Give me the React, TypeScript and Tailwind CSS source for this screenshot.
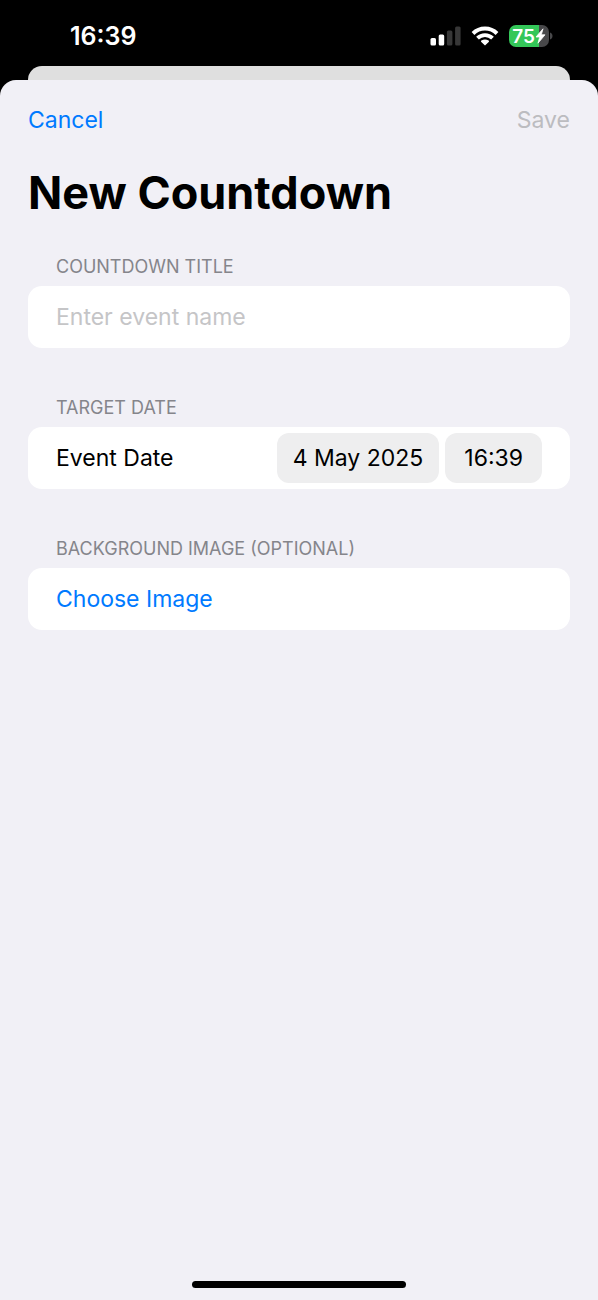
import clsx from "clsx";
import React, { ReactNode, useState } from "react";

interface ISectionProps {
  title: ReactNode;
  children: ReactNode;
}

const SignalIcon = () => (
  <svg width="31" height="20" viewBox="0 0 31 20" aria-hidden="true">
    <rect x="0.5" y="12" width="5.5" height="7.5" rx="1.5" fill="#fff" />
    <rect x="8.7" y="8.5" width="5.5" height="11" rx="1.5" fill="#fff" />
    <rect x="16.9" y="4.5" width="5.5" height="15" rx="1.5" fill="#373737" />
    <rect x="25.1" y="0.5" width="5.5" height="19" rx="1.5" fill="#373737" />
  </svg>
);

const WifiIcon = () => (
  <svg width="28" height="20" viewBox="0 0 28 20" aria-hidden="true">
    <g fill="none" stroke="#fff" strokeWidth="3.9">
      <path d="M2 7.500a17 17 0 0 1 24 0" />
      <path d="M6.500 12.200a10.700 10.700 0 0 1 15 0" />
    </g>
    <path
      d="M14 19.600l-3.700-3.700c-.5-.5-.4-1 .1-1.300a6.400 6.400 0 0 1 7.200 0c.5.3.6.8.1 1.300z"
      fill="#fff"
    />
  </svg>
);

const Battery = () => (
  <div className="flex items-center gap-px">
    <div className="flex h-[22px] w-10 items-center justify-center overflow-hidden rounded-[7px] bg-linear-to-r from-[#34c759] from-75% to-[#48484a] to-75%">
      <span className="text-[19px] leading-none font-semibold">75</span>
      <svg width="11" height="16" viewBox="0 0 11 16" aria-hidden="true">
        <path
          d="M8 0.8L1 9h3.700L3 15.200 10 6.800H6.300z"
          fill="#fff"
          stroke="#fff"
          strokeWidth="0.8"
          strokeLinejoin="round"
        />
      </svg>
    </div>
    <svg width="3" height="8" viewBox="0 0 3 8" aria-hidden="true">
      <path d="M0 0.5C1.5 1 2.5 2.4 2.5 4S1.5 7 0 7.5z" fill="#48484a" />
    </svg>
  </div>
);

const StatusBar = () => (
  <div className="flex h-[66px] items-center justify-between pt-1.5 pr-[45px] pl-[70px] text-white">
    <span className="text-[25px] leading-8 font-semibold">16:39</span>
    <div className="flex items-center gap-2.5">
      <SignalIcon />
      <WifiIcon />
      <Battery />
    </div>
  </div>
);

const Section = ({ title, children }: ISectionProps) => (
  <section>
    <div className="mb-[7px] px-7 text-[18px] leading-6 text-[#85858b] uppercase">
      {title}
    </div>
    <div className="flex h-[62px] items-center overflow-hidden rounded-[14px] bg-white">
      {children}
    </div>
  </section>
);

const App = () => {
  const [name, setName] = useState("");
  const canSave = name.trim().length > 0;

  return (
    <div className="flex min-h-screen flex-col bg-black font-[Inter,sans-serif] text-[23px] text-black">
      <StatusBar />

      {/* CARD BEHIND THE SHEET */}
      <div className="mx-7 h-3.5 rounded-t-[14px] bg-[#dfdfdf]"></div>

      {/* SHEET */}
      <main className="flex grow flex-col rounded-t-[16px] bg-[#f1f0f6] px-7">
        <header>
          <nav className="flex h-20 items-center justify-between">
            <button type="button" className="text-[#007aff]">
              Cancel
            </button>
            <button
              type="submit"
              form="countdown"
              disabled={!canSave}
              className={clsx(canSave ? "text-[#007aff]" : "text-[#bcbcc0]")}
            >
              Save
            </button>
          </nav>
          <h1 className="text-[45px] leading-[66px] font-bold">
            New Countdown
          </h1>
        </header>

        <form
          id="countdown"
          className="mt-[29px] flex grow flex-col gap-12"
          onSubmit={(e) => e.preventDefault()}
        >
          <Section title={<label htmlFor="name">Countdown title</label>}>
            <input
              id="name"
              type="text"
              value={name}
              onChange={(e) => setName(e.target.value)}
              placeholder="Enter event name"
              className="h-full w-full px-7 outline-none placeholder:text-[#c5c5c7]"
            />
          </Section>

          <Section title="Target date">
            <div className="flex w-full items-center justify-between px-7">
              <span id="event-date">Event Date</span>
              <div
                role="group"
                aria-labelledby="event-date"
                className="flex gap-1.5"
              >
                <button
                  type="button"
                  className="h-[50px] rounded-xl bg-[#eeeeef] px-4"
                >
                  4 May 2025
                </button>
                <button
                  type="button"
                  className="h-[50px] rounded-xl bg-[#eeeeef] px-[19px]"
                >
                  16:39
                </button>
              </div>
            </div>
          </Section>

          <Section title="Background image (optional)">
            <button
              type="button"
              className="h-full w-full px-7 text-left text-[#007aff]"
            >
              Choose Image
            </button>
          </Section>
        </form>

        {/* HOME INDICATOR */}
        <div className="mb-3 h-[7px] w-[214px] self-center rounded-full bg-black"></div>
      </main>
    </div>
  );
};

export default App;
